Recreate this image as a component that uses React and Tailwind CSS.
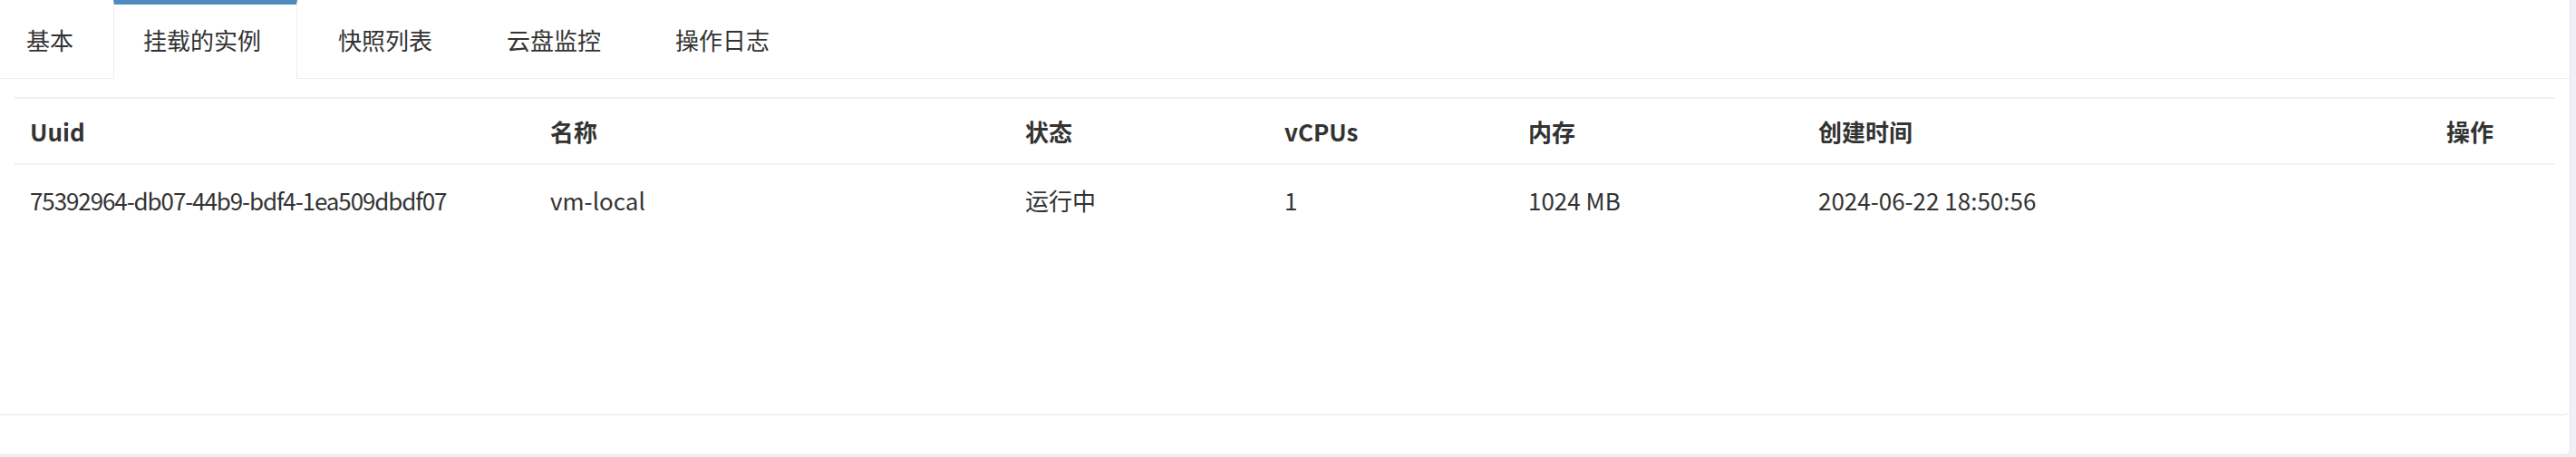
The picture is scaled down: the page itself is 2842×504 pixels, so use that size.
const tabs = ['基本', '挂载的实例', '快照列表', '云盘监控', '操作日志']

const tabPadding = [
  'pl-[29px] pr-[44px]',
  'pl-[32px] pr-[39px]',
  'pl-[45px] pr-[41px]',
  'px-[41px]',
  'px-[41px]',
]

// uuid column renders a touch wider than the original font, so tighten it
const columns = [
  { key: 'uuid', label: 'Uuid', width: 'w-[574px]', cell: 'tracking-[-1.1px]' },
  { key: 'name', label: '名称', width: 'w-[524px]', cell: '' },
  { key: 'state', label: '状态', width: 'w-[286px]', cell: '' },
  { key: 'vcpus', label: 'vCPUs', width: 'w-[269px]', cell: '' },
  { key: 'memory', label: '内存', width: 'w-[320px]', cell: '' },
  { key: 'created', label: '创建时间', width: 'w-[693px]', cell: '' },
  { key: 'actions', label: '操作', width: '', cell: '' },
]

const rows = [
  {
    uuid: '75392964-db07-44b9-bdf4-1ea509dbdf07',
    name: 'vm-local',
    state: '运行中',
    vcpus: '1',
    memory: '1024 MB',
    created: '2024-06-22 18:50:56',
    actions: '',
  },
]

export default function App() {
  return (
    <div className="w-[2842px] h-[504px] bg-[#eef0f5] text-[#333] font-['Noto_Sans_CJK_SC','Noto_Sans',sans-serif]">
      <div className="w-[2836px] h-[502px] bg-white border-r border-b border-[#e3e5ea] rounded-br-md flex flex-col">
        <div className="h-[458px] border-b border-[#e6e7ea] rounded-br-md flex flex-col">
          <ul className="flex h-[87px] border-b border-[#eeeeee]">
            {tabs.map((tab, i) => (
              <li
                key={tab}
                className={`flex items-center text-[26px] ${tabPadding[i]} ${
                  i === 1
                    ? 'border-t-[5px] border-t-[#4f8bbf] border-x border-x-[#eeeeee] bg-white -mb-px pb-[5px]'
                    : ''
                }`}
              >
                {tab}
              </li>
            ))}
          </ul>
          <div className="px-4 pt-[20px]">
            <table className="w-full border-collapse text-[26px]">
              <thead>
                <tr className="border-t-2 border-b-2 border-[#f1f1f1]">
                  {columns.map((col) => (
                    <th key={col.key} className={`${col.width} h-[73px] px-[17px] text-left font-bold`}>
                      {col.label}
                    </th>
                  ))}
                </tr>
              </thead>
              <tbody>
                {rows.map((row) => (
                  <tr key={row.uuid}>
                    {columns.map((col) => (
                      <td key={col.key} className={`h-[78px] px-[17px] text-left ${col.cell}`}>
                        {row[col.key]}
                      </td>
                    ))}
                  </tr>
                ))}
              </tbody>
            </table>
          </div>
        </div>
      </div>
    </div>
  )
}
